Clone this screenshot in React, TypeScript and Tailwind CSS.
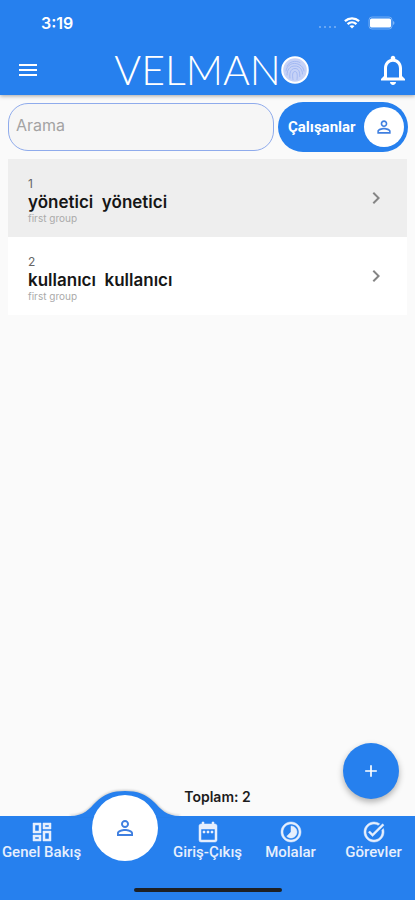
import {
  MdAdd,
  MdChevronRight,
  MdDateRange,
  MdMenu,
  MdNotificationsNone,
  MdOutlineDashboard,
  MdOutlineTimelapse,
  MdPersonOutline,
  MdTaskAlt,
} from "react-icons/md";
import type { IconType } from "react-icons";

type Employee = { id: number; name: string; group: string };

const employees: Employee[] = [
  { id: 1, name: "yönetici  yönetici", group: "first group" },
  { id: 2, name: "kullanıcı  kullanıcı", group: "first group" },
];

function Fingerprint() {
  return (
    <svg viewBox="0 0 28 28" className="size-7" fill="none" aria-hidden="true">
      <circle cx="14" cy="14" r="12.8" fill="#c6d2f7" stroke="#ffffff" strokeWidth="2" />
      <g stroke="#93adf1" strokeWidth="0.7" strokeLinecap="round">
        <path d="M6 10C8.5 5.5 14 4 19 6.5" />
        <path d="M5 15C5.5 9 12 5.5 18 8.5c3 1.4 4.8 4 5 6.5" />
        <path d="M6 19c0-5 2.5-9 8-9 4.5 0 7.5 3.5 7.5 8" />
        <path d="M9 22c-.8-4.5.5-9.5 5-9.5 3.5 0 5 3 4.8 8" />
        <path d="M12 23.5c-.8-4-.7-8 2-8 2.5 0 2.5 4 2 8" />
      </g>
    </svg>
  );
}

function StatusBar() {
  return (
    <div className="flex h-[46px] items-center justify-between pr-[19px] pl-[41px]">
      <span className="text-base font-semibold">3:19</span>
      <div className="flex items-center gap-1">
        <span className="flex gap-[3px] pt-2 pr-1 opacity-40">
          <i className="size-0.5 rounded-full bg-white" />
          <i className="size-0.5 rounded-full bg-white" />
          <i className="size-0.5 rounded-full bg-white" />
          <i className="size-0.5 rounded-full bg-white" />
        </span>
        <svg viewBox="0 0 18 13" className="h-3 w-4" fill="none" stroke="white" strokeWidth="2.6" aria-hidden="true">
          <path d="M1 4.5c4.6-4.2 11.4-4.2 16 0" />
          <path d="M4 7.8c3-2.7 7-2.7 10 0" />
          <path d="M9 12.8 6.2 10c1.7-1.4 3.9-1.4 5.6 0z" fill="white" stroke="none" />
        </svg>
        <svg viewBox="0 0 28 14" className="ml-1 h-3.5 w-7" aria-hidden="true">
          <rect x="1" y="1" width="23" height="12" rx="3" fill="none" stroke="white" strokeOpacity="0.35" />
          <rect x="2" y="2.5" width="21" height="9" rx="1.5" fill="white" />
          <path d="M25.2 5v4c1.6-.6 1.6-3.4 0-4z" fill="white" fillOpacity="0.5" />
        </svg>
      </div>
    </div>
  );
}

function Header() {
  return (
    <header className="h-[95px] bg-[#2680ee] text-white shadow-[0_1px_4px_rgba(0,0,0,0.35)]">
      <StatusBar />
      <div className="flex h-12 items-center justify-between pr-1 pl-4">
        <button type="button" aria-label="Menü">
          <MdMenu className="size-6" />
        </button>
        <h1 className="flex items-center pl-2 font-[Lato] text-[41px] leading-9 font-light">
          <span>VELMAN</span>
          <Fingerprint />
        </h1>
        <button type="button" aria-label="Bildirimler">
          <MdNotificationsNone className="size-9" />
        </button>
      </div>
    </header>
  );
}

function SearchRow() {
  return (
    <div className="flex items-center gap-1 pt-[7px] pr-[7px] pl-2">
      <input
        type="search"
        aria-label="Arama"
        placeholder="Arama"
        className="h-12 min-w-0 flex-1 rounded-[20px] border border-[#8fabec] bg-[#f6f6f6] px-[7px] pb-1 text-base text-gray-800 outline-none placeholder:text-[#a3a3a3]"
      />
      <button
        type="button"
        className="flex h-[50px] w-[130px] items-center justify-between rounded-full bg-[#2680ee] pr-1 pl-2.5 font-[Roboto] text-[15px] font-bold text-white"
      >
        Çalışanlar
        <span className="flex size-10 items-center justify-center rounded-full bg-white text-[#3f7fe0]">
          <MdPersonOutline className="size-5" />
        </span>
      </button>
    </div>
  );
}

function EmployeeRow({ employee }: { employee: Employee }) {
  return (
    <li className="bg-white odd:bg-[#eeeeee]">
      <button type="button" className="flex h-[78px] w-full items-center justify-between pr-[19px] pl-5 text-left">
        <span className="flex flex-col pt-1">
          <span className="text-xs leading-4 text-[#666666]">{employee.id}</span>
          <span className="text-[17px] leading-5 font-semibold whitespace-pre text-[#161616]">{employee.name}</span>
          <span className="text-[10px] leading-3 text-[#aaaaaa]">{employee.group}</span>
        </span>
        <MdChevronRight className="size-6 text-[#858585]" />
      </button>
    </li>
  );
}

function NavItem({ icon: Icon, label }: { icon: IconType; label: string }) {
  return (
    <a href="#" className="flex flex-col items-center pt-1 whitespace-nowrap">
      <Icon className="size-6 stroke-current stroke-[0.5px] [&>path[fill=none]]:stroke-none" />
      <span className="leading-4">{label}</span>
    </a>
  );
}

function BottomNav() {
  return (
    <nav className="relative bg-[#2680ee] font-[Roboto] text-[15px] font-medium text-[#e6effd]">
      <div className="grid h-[70px] grid-cols-5">
        <NavItem icon={MdOutlineDashboard} label="Genel Bakış" />
        <div className="relative">
          <svg
            viewBox="0 0 110 27"
            className="absolute -top-[26px] left-1/2 h-[27px] w-[110px] -translate-x-1/2 drop-shadow-[0_-1px_1px_rgba(0,0,0,0.2)]"
            aria-hidden="true"
          >
            <path d="M0 27V26C14 26 19 19 26 12C34 4 43 1 55 1C67 1 76 4 84 12C91 19 96 26 110 26V27Z" fill="#2680ee" />
          </svg>
          <a
            href="#"
            aria-label="Çalışanlar"
            aria-current="page"
            className="absolute -top-[21px] left-1/2 flex size-[66px] -translate-x-1/2 items-center justify-center rounded-full bg-white text-[#3f7fe0]"
          >
            <MdPersonOutline className="size-6" />
          </a>
        </div>
        <NavItem icon={MdDateRange} label="Giriş-Çıkış" />
        <NavItem icon={MdOutlineTimelapse} label="Molalar" />
        <NavItem icon={MdTaskAlt} label="Görevler" />
      </div>
      <div className="flex h-3.5 items-start justify-center pt-0.5">
        <span className="h-1 w-[148px] rounded-full bg-[#1d2024]" />
      </div>
    </nav>
  );
}

export default function App() {
  return (
    <div className="flex min-h-screen flex-col bg-[#fafafa] font-[Inter,sans-serif]">
      <Header />
      <main className="flex flex-1 flex-col">
        <SearchRow />
        <ul className="mx-2 mt-[7px]">
          {employees.map((employee) => (
            <EmployeeRow key={employee.id} employee={employee} />
          ))}
        </ul>
        <div className="mt-auto flex justify-end pr-4">
          <button
            type="button"
            aria-label="Ekle"
            className="-mb-2.5 flex size-14 items-center justify-center rounded-full bg-[#2680ee] text-white shadow-[0_3px_6px_rgba(0,0,0,0.3)]"
          >
            <MdAdd className="size-5" />
          </button>
        </div>
        <p className="h-[27px] pl-5 text-center text-sm leading-4 font-semibold text-[#1c1c1c]">Toplam: 2</p>
      </main>
      <BottomNav />
    </div>
  );
}
